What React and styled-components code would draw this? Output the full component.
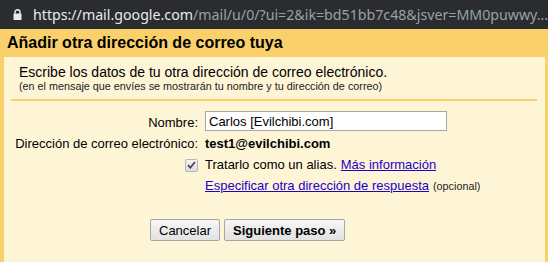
import React from 'react'
import styled, { createGlobalStyle } from 'styled-components'

const Global = createGlobalStyle`
  html, body { margin: 0; padding: 0; background: #fef5d6; }
  body { font-family: "Liberation Sans", Arial, sans-serif; }
`;

function LockIcon() {
  return (
    <Lock width="9" height="11" viewBox="0 0 9 11">
      <path d="M2 5V3.3a2.5 2.5 0 0 1 5 0V5" fill="none" stroke="#e8eaed" strokeWidth="1.4" />
      <rect x="0.5" y="4.6" width="8" height="6.4" rx="0.8" fill="#e8eaed" />
    </Lock>
  )
}

function Check() {
  return (
    <CheckBox>
      <svg width="9" height="8" viewBox="0 0 9 8">
        <path d="M1 4.2l2.3 2.5L8 1" fill="none" stroke="#4a4a4a" strokeWidth="1.8" />
      </svg>
    </CheckBox>
  )
}

function App() {
  return (
    <>
      <Global />
      <AddressBar>
        <LockIcon />
        <Url>
          <Host>https://mail.google.com</Host>/mail/u/0/?ui=2&amp;ik=bd51bb7c48&amp;jsver=MM0puwwy...
        </Url>
      </AddressBar>
      <Header>Añadir otra dirección de correo tuya</Header>
      <Panel>
        <Intro>
          <Lead>Escribe los datos de tu otra dirección de correo electrónico.</Lead>
          <Small>(en el mensaje que envíes se mostrarán tu nombre y tu dirección de correo)</Small>
        </Intro>
        <Divider />
        <Form>
          <Label>Nombre:</Label>
          <Value>
            <Input defaultValue="Carlos [Evilchibi.com]" />
          </Value>
          <Label>Dirección de correo electrónico:</Label>
          <Value><strong>test1@evilchibi.com</strong></Value>
          <Label><Check /></Label>
          <Value>Tratarlo como un alias. <Link>Más información</Link></Value>
          <Label />
          <Value><Link>Especificar otra dirección de respuesta</Link> <Small as="span">(opcional)</Small></Value>
        </Form>
        <Buttons>
          <Button>Cancelar</Button>
          <Button $primary>Siguiente paso »</Button>
        </Buttons>
      </Panel>
    </>
  )
}

export default App

const AddressBar = styled.div`
  height: 29px;
  background: #2b2c2f;
  display: flex;
  align-items: center;
  padding-left: 13px;
  gap: 11px;
  overflow: hidden;
`;

const Lock = styled.svg`
  flex-shrink: 0;
  margin-top: -1px;
`;

const Url = styled.div`
  font-family: "Noto Sans", "Open Sans", sans-serif;
  font-size: 14.2px;
  color: #9aa0a6;
  white-space: nowrap;
  margin-top: -1px;
`;

const Host = styled.span`
  color: #e8eaed;
`;

const Header = styled.div`
  height: 28px;
  background: #f9d06a;
  font-size: 16px;
  font-weight: bold;
  color: #000;
  display: flex;
  align-items: center;
  padding-left: 7px;
`;

const Panel = styled.div`
  margin: 0 3px 0 4px;
  background: #fef5d6;
  min-height: 205px;
  box-shadow: -4px 0 0 #f9d06a, 3px 0 0 #f9d06a;
`;

const Intro = styled.div`
  padding: 7px 0 0 15px;
`;

const Lead = styled.div`
  font-size: 14px;
  color: #000;
  line-height: 16px;
`;

const Small = styled.div`
  font-size: 10.8px;
  color: #222;
  line-height: 12px;
`;

const Divider = styled.div`
  height: 2px;
  background: #f9d06a;
  margin: 7px 8px 0 7px;
`;

const Form = styled.div`
  display: grid;
  grid-template-columns: 194px 1fr;
  column-gap: 7px;
  margin-top: 10px;
  font-size: 13px;
  color: #000;
`;

const Label = styled.div`
  display: flex;
  justify-content: flex-end;
  align-items: center;
  min-height: 21px;
  white-space: nowrap;
`;

const Value = styled.div`
  display: flex;
  align-items: center;
  gap: 4px;
  min-height: 21px;
  white-space: nowrap;
`;

const Input = styled.input`
  width: 242px;
  height: 20px;
  box-sizing: border-box;
  border: 1px solid #a9a9a9;
  background: #fff;
  font-family: "Liberation Sans", Arial, sans-serif;
  font-size: 13px;
  padding: 0 3px;
  margin-bottom: 2px;
  outline: none;
`;

const Link = styled.a`
  color: #2200cc;
  text-decoration: underline;
  cursor: pointer;
`;

const CheckBox = styled.span`
  width: 11px;
  height: 11px;
  border: 1px solid #b8b8b8;
  background: linear-gradient(#f4f4f4, #dcdcdc);
  border-radius: 2px;
  display: flex;
  align-items: center;
  justify-content: center;
  margin-top: 1px;
`;

const Buttons = styled.div`
  display: flex;
  gap: 4px;
  padding-left: 146px;
  margin-top: 23px;
`;

const Button = styled.button`
  height: 22px;
  padding: 0 8px;
  border: 1px solid #a6a6a6;
  border-radius: 2px;
  background: linear-gradient(#f6f6f6, #e2e2e2);
  font-family: "Liberation Sans", Arial, sans-serif;
  font-size: 13px;
  font-weight: ${p => (p.$primary ? 'bold' : 'normal')};
  color: #000;
  cursor: pointer;
`;
